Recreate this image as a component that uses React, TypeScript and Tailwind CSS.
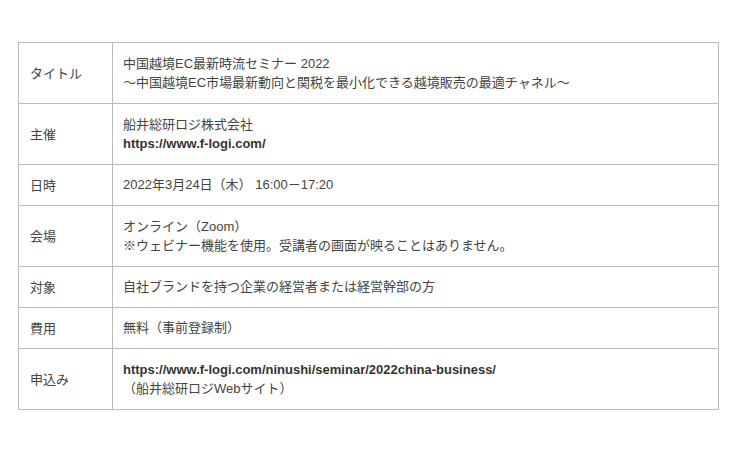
import type { ReactNode } from "react";

type Row = { label: string; lines: ReactNode[] };

const rows: Row[] = [
  {
    label: "タイトル",
    lines: [
      "中国越境EC最新時流セミナー 2022",
      "～中国越境EC市場最新動向と関税を最小化できる越境販売の最適チャネル～",
    ],
  },
  {
    label: "主催",
    lines: ["船井総研ロジ株式会社", <span className="font-bold text-[#333]">https://www.f-logi.com/</span>],
  },
  { label: "日時", lines: ["2022年3月24日（木） 16:00－17:20"] },
  {
    label: "会場",
    lines: ["オンライン（Zoom）", "※ウェビナー機能を使用。受講者の画面が映ることはありません。"],
  },
  { label: "対象", lines: ["自社ブランドを持つ企業の経営者または経営幹部の方"] },
  { label: "費用", lines: ["無料（事前登録制）"] },
  {
    label: "申込み",
    lines: [
      <span className="font-bold text-[#333]">https://www.f-logi.com/ninushi/seminar/2022china-business/</span>,
      "（船井総研ロジWebサイト）",
    ],
  },
];

export default function App() {
  return (
    <div
      className="h-[450px] w-[740px] bg-white pt-[42px] pl-[18px] text-[13px] leading-[19px] text-[#444]"
      style={{ fontFamily: '"Liberation Sans", "Noto Sans CJK JP", sans-serif' }}
    >
      <div className="w-[701px] border border-[#bcbcbc]">
        {rows.map((row, i) => (
          <div
            className={`flex ${row.lines.length > 1 ? "h-[60px]" : "h-[40px]"} ${i > 0 ? "box-content border-t border-[#bcbcbc]" : ""}`}
            key={row.label}
          >
            <div className="flex w-[94px] shrink-0 items-center border-r border-[#bcbcbc] pl-[11px]">{row.label}</div>
            <div className="flex flex-col justify-center pl-[10px] pb-[1px]">
              {row.lines.map((line, j) => (
                <div key={j}>{line}</div>
              ))}
            </div>
          </div>
        ))}
      </div>
    </div>
  );
}
